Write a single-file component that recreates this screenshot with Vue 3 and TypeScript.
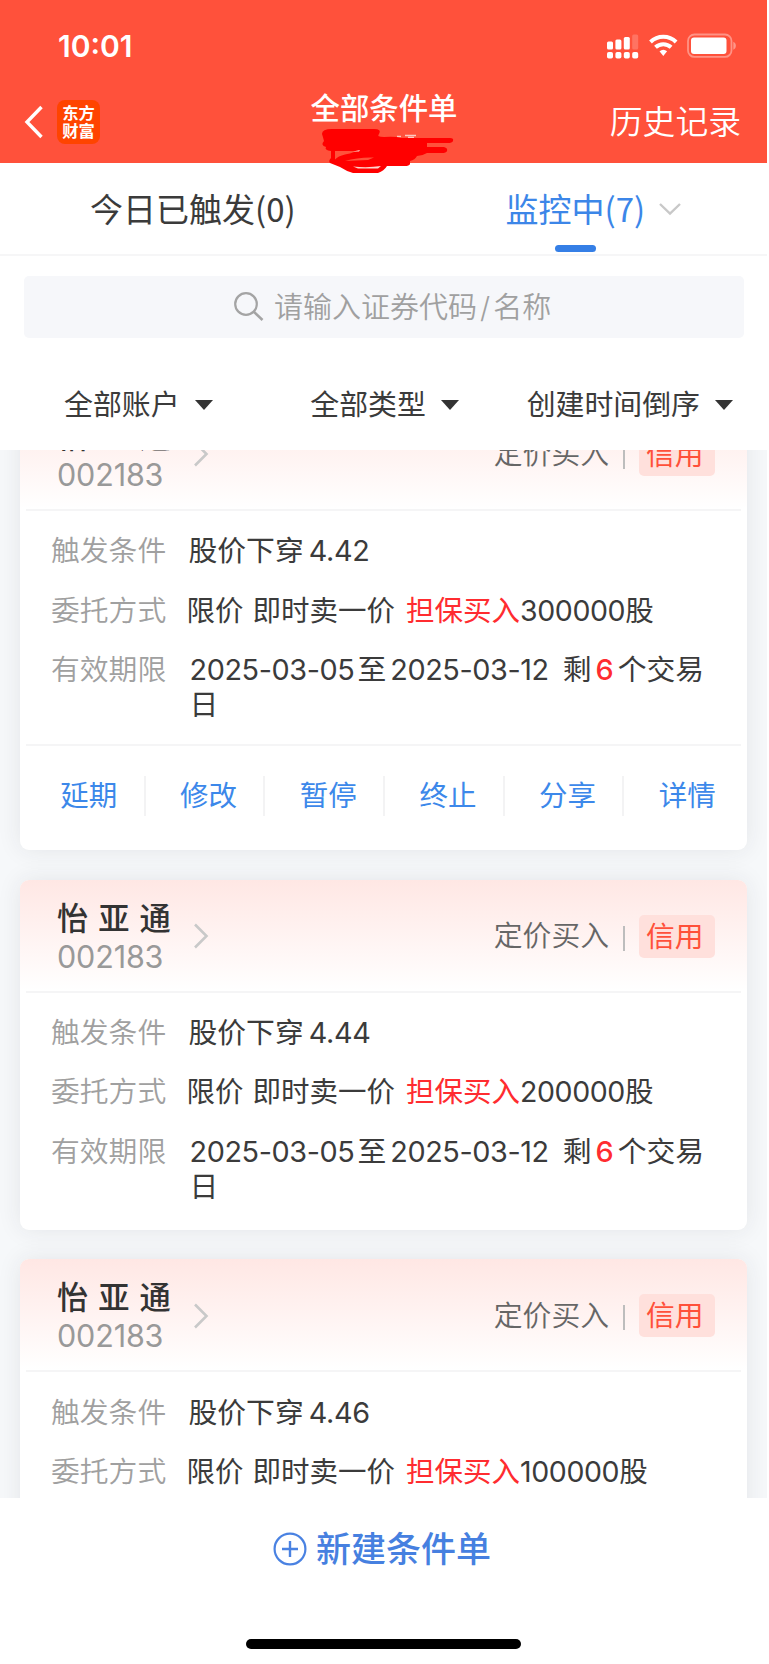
<script setup lang="ts">
interface Order {
  name: string
  code: string
  price: string
  volume: string
  actions?: string[]
}

const filters: string[] = ['全部账户', '全部类型', '创建时间倒序']

const orders: Order[] = [
  {
    name: '怡 亚 通',
    code: '002183',
    price: '4.42',
    volume: '300000',
    actions: ['延期', '修改', '暂停', '终止', '分享', '详情'],
  },
  { name: '怡 亚 通', code: '002183', price: '4.44', volume: '200000' },
  { name: '怡 亚 通', code: '002183', price: '4.46', volume: '100000' },
]
</script>

<template>
  <div class="page">
    <header class="top">
      <div class="status">
        <span class="clock">10:01</span>
        <svg class="status-icons" width="132" height="26" viewBox="0 0 132 26">
          <g fill="#fff">
            <rect x="1" y="8.5" width="6" height="8" rx="1.5" />
            <rect x="9.4" y="6.5" width="6" height="10" rx="1.5" />
            <rect x="17.8" y="4" width="6" height="12.5" rx="1.5" />
            <rect x="26.2" y="1.5" width="6" height="15" rx="1.5" opacity=".2" />
            <rect x="1" y="19" width="6" height="6.5" rx="1.8" />
            <rect x="9.4" y="19" width="6" height="6.5" rx="1.8" />
            <rect x="17.8" y="19" width="6" height="6.5" rx="1.8" />
            <rect x="26.2" y="19" width="6" height="6.5" rx="1.8" />
            <path d="M53.5 18.2a6 6 0 0 1 7.6 0L57.3 23Z" />
            <rect x="85" y="4.5" width="35.5" height="16.5" rx="3" />
            <path d="M127.3 8.8c3.4 1.2 3.4 6.8 0 8Z" opacity=".4" />
          </g>
          <path d="M44.5 9a18.5 18.5 0 0 1 25.6 0M49.5 14.3a11.4 11.4 0 0 1 15.6 0" fill="none" stroke="#fff" stroke-width="4" />
          <rect x="82" y="1.5" width="43.5" height="22.4" rx="6.5" fill="none" stroke="#fff" stroke-width="1.8" opacity=".38" />
        </svg>
      </div>
      <div class="nav">
        <div class="nav-left">
          <svg width="20" height="34" viewBox="0 0 20 34">
            <path d="M17.5 2 3 17l14.5 15" fill="none" stroke="#fff" stroke-width="3.4" />
          </svg>
          <div class="logo"><span>东方</span><span>财富</span></div>
        </div>
        <h1 class="title">全部条件单</h1>
        <span class="history">历史记录</span>
      </div>
      <svg class="scribble" width="140" height="50" viewBox="0 0 140 50">
        <path d="M79 11.5h4M87 10.5h11M90 12.5h6" stroke="#ffc9c0" stroke-width="1.4" fill="none" />
        <path
          d="M4 9Q4 4 14 4H56Q64 4 61 9Q58 12 66 12Q76 11 84 13H132Q136 13 135 16Q134 18 130 18H109V22H126Q130 23 129 26Q128 28 124 28H109Q104 31 99 31Q97 35 92 36V39Q91 41 87 41H69Q66 46 60 48H35Q28 46 22 42L12 38Q10 36 13 33V26Q6 25 8 22Q2 20 6 16Q5 12 4 9Z"
          fill="#f00"
        />
        <path d="M17 26h22q-8 3-12 3.500Q20 31 17 34.500ZM27 36Q40 32 56 32.500L50 35Z" fill="#ff513b" />
        <path d="M35 26.500l7-1.500-1 1.500ZM35 41.500Q50 43 63 41L60 43.500H40Z" fill="#ffd7cf" />
      </svg>
    </header>

    <nav class="tabs">
      <div class="tab">今日已触发(0)</div>
      <div class="tab active">
        <span>监控中(7)</span>
        <svg width="24" height="14" viewBox="0 0 24 14">
          <path d="m2 2 10 9.5L22 2" fill="none" stroke="#c8c8c8" stroke-width="2.4" />
        </svg>
        <i class="underline"></i>
      </div>
    </nav>

    <div class="search">
      <svg width="32" height="32" viewBox="0 0 32 32">
        <circle cx="13" cy="13" r="10.8" fill="none" stroke="#a4a4a4" stroke-width="2.2" />
        <path d="m20.5 20.5 9 8.5" stroke="#a4a4a4" stroke-width="2.5" />
      </svg>
      <span>请输入证券代码<b>/</b>名称</span>
    </div>

    <div class="filters">
      <div v-for="f in filters" :key="f" class="filter">
        <span>{{ f }}</span>
        <i class="caret"></i>
      </div>
    </div>

    <main class="list">
      <div class="track">
        <section v-for="o in orders" :key="o.price" class="card">
          <div class="card-head">
            <div class="stock">
              <strong>{{ o.name }}</strong>
              <span>{{ o.code }}</span>
            </div>
            <svg class="go" width="18" height="28" viewBox="0 0 18 28">
              <path d="m3 2.5 11.5 11.5L3 25.5" fill="none" stroke="#c9c9c9" stroke-width="2.6" />
            </svg>
            <span class="kind">定价买入</span>
            <i class="sep"></i>
            <span class="badge">信用</span>
          </div>
          <div class="rows">
            <div class="row">
              <span class="label">触发条件</span>
              <p class="value trigger">股价下穿<span class="price">{{ o.price }}</span></p>
            </div>
            <div class="row">
              <span class="label">委托方式</span>
              <p class="value method"><span>限价</span><span>即时卖一价</span><em>担保买入</em><span class="volume">{{ o.volume }}</span>股</p>
            </div>
            <div class="row">
              <span class="label">有效期限</span>
              <p class="value period"><span class="date">2025-03-05</span><span class="to">至</span><span class="date">2025-03-12</span><span class="left">剩</span><em>6</em>个交易日</p>
            </div>
          </div>
          <div v-if="o.actions" class="actions">
            <button v-for="a in o.actions" :key="a" type="button">{{ a }}</button>
          </div>
        </section>
      </div>
    </main>

    <footer class="bottom">
      <div class="create">
        <svg width="34" height="34" viewBox="0 0 34 34">
          <path d="M17 9v16M9 17h16" stroke="#4a82e2" stroke-width="2.4" />
          <circle cx="17" cy="17" r="15.4" fill="none" stroke="#4a82e2" stroke-width="2.2" />
        </svg>
        <span>新建条件单</span>
      </div>
      <i class="home"></i>
    </footer>
  </div>
</template>

<style>
body {
  margin: 0;
  background: #fff;
}
</style>

<style scoped>
* {
  box-sizing: border-box;
}
.page {
  width: 769px;
  height: 1664px;
  padding-right: 2px;
  overflow: hidden;
  display: flex;
  flex-direction: column;
  background: #fff;
  font-family: Inter, "Noto Sans CJK SC", sans-serif;
  color: #3b3b3b;
}
i,
em {
  font-style: normal;
}
.top {
  position: relative;
  height: 163px;
  flex: none;
  background: #ff513b;
  color: #fff;
}
.status {
  height: 80px;
  padding: 12px 29px 0 58px;
  display: flex;
  align-items: center;
  justify-content: space-between;
}
.clock {
  font-size: 30px;
  font-weight: 600;
  line-height: 36px;
}
.nav {
  display: grid;
  grid-template-columns: 1fr 150px 1fr;
  height: 83px;
  align-items: center;
}
.nav-left {
  display: flex;
  align-items: center;
  gap: 13px;
  padding-left: 24px;
}
.logo {
  width: 43px;
  height: 44px;
  border-radius: 8px;
  background: #ff4400;
  font: 700 16.3px/18px "Noto Sans CJK SC", sans-serif;
  display: flex;
  flex-direction: column;
  align-items: center;
  justify-content: center;
  padding-bottom: 2px;
}
.title {
  margin: 0 0 26px 2px;
  font-size: 29.4px;
  font-weight: 500;
  line-height: 36px;
  white-space: nowrap;
}
.history {
  justify-self: end;
  margin-right: 26px;
  font-size: 32.8px;
  font-weight: 350;
  line-height: 40px;
}
.scribble {
  position: absolute;
  left: 318px;
  top: 125px;
  z-index: 2;
}
.tabs {
  height: 93px;
  flex: none;
  display: grid;
  grid-template-columns: 1fr 1fr;
  background: #fff;
  border-bottom: 2px solid #f6f6f7;
  font-family: "Noto Sans CJK SC", sans-serif;
  font-size: 33px;
  line-height: 40px;
  font-weight: 400;
}
.tab {
  padding: 25px 0 0 90px;
}
.tab.active {
  position: relative;
  display: flex;
  align-items: flex-start;
  gap: 13px;
  padding-left: 122px;
  color: #3c86e8;
}
.active svg {
  margin-top: 14px;
}
.underline {
  position: absolute;
  left: 171px;
  bottom: 2px;
  width: 41px;
  height: 7px;
  border-radius: 4px;
  background: #357fe6;
}
.search {
  background: #f6f7fa;
  height: 62px;
  flex: none;
  border-radius: 5px;
  display: flex;
  align-items: center;
  padding-left: 209px;
  gap: 9px;
  margin: 20px 23px 0 24px;
  color: #a0a0a0;
  font-size: 29px;
  font-weight: 350;
  line-height: 36px;
}
.search span {
  padding-top: 2px;
}
.search b {
  font-weight: 300;
  padding: 0 3px;
}
.filters {
  height: 112px;
  flex: none;
  display: flex;
  align-items: center;
  padding: 22px 34px 0 64px;
  justify-content: space-between;
  font-size: 28.9px;
  line-height: 36px;
}
.filter {
  display: flex;
  align-items: center;
  gap: 15px;
}
.filter:nth-child(2) {
  margin-left: 30px;
}
.caret {
  border: 9.5px solid transparent;
  border-top: 10px solid #333;
  border-bottom: 0;
}
.list {
  height: 1047.7px;
  flex: none;
  overflow: hidden;
  background: #f6f8fa;
}
.track {
  margin-top: -52.3px;
  padding: 0 20px;
  display: flex;
  flex-direction: column;
  gap: 29.6px;
}
.card {
  background: #fff;
  border-radius: 9px;
  padding-bottom: 25.5px;
  box-shadow: 0 0 24px rgba(40, 45, 60, 0.09);
}
.card-head {
  height: 113px;
  border-radius: 9px 9px 0 0;
  background:
    linear-gradient(#f5f5f6, #f5f5f6) center bottom / 715px 2px no-repeat,
    linear-gradient(#ffe7e4, #fff 98%);
  display: flex;
  align-items: center;
  padding-right: 32px;
}
.stock {
  width: 130px;
  padding: 4px 0 0 37px;
  display: flex;
  flex-direction: column;
  white-space: nowrap;
}
.stock strong {
  font-size: 31.3px;
  line-height: 37px;
  font-weight: 500;
  color: #333;
  word-spacing: 1.6px;
}
.stock span {
  font-size: 30.5px;
  line-height: 38px;
  color: #999;
  font-weight: 400;
  letter-spacing: -0.15px;
}
.go {
  margin-left: 42px;
}
.kind {
  margin-left: auto;
  font-size: 28.8px;
  font-weight: 350;
  color: #666;
  line-height: 36px;
}
.sep {
  width: 2px;
  height: 25px;
  margin: 4px 14px 0;
  background: #bdbdbd;
}
.badge {
  width: 76px;
  height: 43px;
  border-radius: 5px;
  background: #ffe0dc;
  color: #ff503a;
  font-size: 28.8px;
  line-height: 43px;
  padding-left: 7px;
}
.rows {
  padding: 23.5px 20px 0 31px;
  display: flex;
  flex-direction: column;
  gap: 24.7px;
}
.row {
  display: flex;
  font-size: 28.8px;
  line-height: 34.7px;
}
.label {
  width: 137.5px;
  flex: none;
  color: #a0a0a0;
  font-weight: 350;
}
.value {
  margin: 0;
  width: 540px;
}
.value em {
  color: #ff2c30;
}
.price {
  margin-left: 5px;
  letter-spacing: -0.3px;
}
.method {
  margin-left: -2px;
  font-size: 28.5px;
}
.method span:nth-child(2) {
  margin: 0 11px 0 9px;
}
.volume {
  letter-spacing: -0.4px;
}
.date {
  letter-spacing: -0.4px;
}
.to {
  margin: 0 4px 0 3px;
}
.left {
  margin-left: 14px;
}
.period {
  padding-left: 1px;
}
.period em {
  margin: 0 4px 0 4px;
  font-weight: 500;
}
.actions {
  margin-top: 21.3px;
  margin-bottom: -25.5px;
  height: 106.3px;
  display: grid;
  grid-template-columns: repeat(6, 119.7px);
  padding: 32px 0 0 6px;
  background: linear-gradient(#f5f5f6, #f5f5f6) center top / 715px 2px no-repeat;
}
.actions button {
  height: 40px;
  border: 0;
  border-right: 2px solid #f3f3f4;
  padding: 0 0 0 8px;
  background: none;
  color: #3c88ea;
  font: 400 28.5px/40px Inter, "Noto Sans CJK SC", sans-serif;
}
.actions button:last-child {
  border-color: transparent;
}
.bottom {
  flex: 1;
  display: flex;
  flex-direction: column;
  align-items: center;
}
.create {
  margin-top: 29px;
  height: 44px;
  display: flex;
  align-items: center;
  gap: 9px;
  padding-right: 3px;
  font-size: 35px;
  font-weight: 500;
  line-height: 44px;
  color: #4680e0;
}
.home {
  width: 275px;
  height: 10px;
  margin-top: 68px;
  border-radius: 5px;
  background: #000;
}
</style>
